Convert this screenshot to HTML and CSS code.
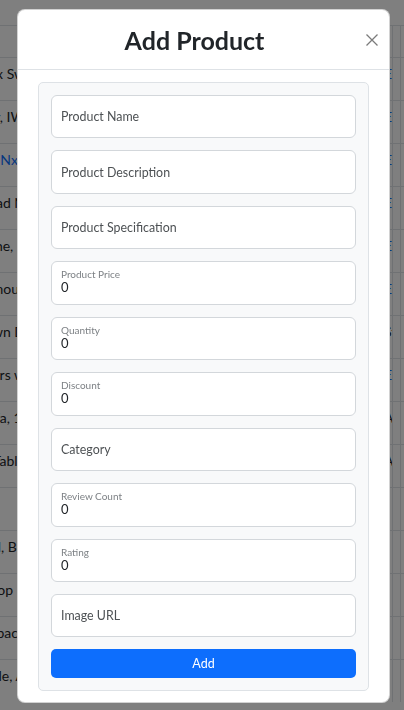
FILE: index.html
```html
<!DOCTYPE html>
<html lang="en">
<head>
<meta charset="utf-8">
<title>Add Product</title>
<link rel="stylesheet" href="styles.css">
</head>
<body>
<div class="page">
  <div class="row row-head"><div class="c1"></div><div class="c2"></div><div class="c3"></div><div class="c4"></div><div class="c5"></div></div>
  <div class="row"><div class="c1"><span>Rolex Sw</span></div><div class="c2"></div><div class="c3 link">Edit</div><div class="c4"></div><div class="c5"></div></div>
  <div class="row"><div class="c1"><span>Cartier, IW</span></div><div class="c2"></div><div class="c3 link">Edit</div><div class="c4"></div><div class="c5"></div></div>
  <div class="row"><div class="c1 link"><span>Asus NxT</span></div><div class="c2"></div><div class="c3 link">Edit</div><div class="c4"></div><div class="c5"></div></div>
  <div class="row"><div class="c1"><span>iPad N</span></div><div class="c2"></div><div class="c3 link">Edit</div><div class="c4"></div><div class="c5"></div></div>
  <div class="row"><div class="c1"><span>Phone, 6</span></div><div class="c2"></div><div class="c3 link">Edit</div><div class="c4"></div><div class="c5"></div></div>
  <div class="row"><div class="c1"><span>Famous</span></div><div class="c2"></div><div class="c3 link">Edit</div><div class="c4"></div><div class="c5"></div></div>
  <div class="row"><div class="c1"><span>Brown D</span></div><div class="c2"></div><div class="c3">Stock</div><div class="c4"></div><div class="c5"></div></div>
  <div class="row"><div class="c1"><span>Sneakers w</span></div><div class="c2"></div><div class="c3 link">Edit</div><div class="c4"></div><div class="c5"></div></div>
  <div class="row"><div class="c1"><span>Sofa, 1.</span></div><div class="c2"></div><div class="c3">Acme</div><div class="c4"></div><div class="c5"></div></div>
  <div class="row"><div class="c1"><span>Table</span></div><div class="c2"></div><div class="c3">Acme</div><div class="c4"></div><div class="c5"></div></div>
  <div class="row"><div class="c1"><span></span></div><div class="c2"></div><div class="c3"></div><div class="c4"></div><div class="c5"></div></div>
  <div class="row"><div class="c1"><span>Grill, BE</span></div><div class="c2"></div><div class="c3"></div><div class="c4"></div><div class="c5"></div></div>
  <div class="row"><div class="c1"><span>Laptop P</span></div><div class="c2"></div><div class="c3"></div><div class="c4"></div><div class="c5"></div></div>
  <div class="row"><div class="c1"><span>Backpack</span></div><div class="c2"></div><div class="c3"></div><div class="c4"></div><div class="c5"></div></div>
  <div class="row"><div class="c1"><span>Table, A</span></div><div class="c2"></div><div class="c3"></div><div class="c4"></div><div class="c5"></div></div>
</div>

<div class="backdrop"></div>

<div class="modal">
  <div class="dialog">
    <div class="modal-header">
      <h2 class="modal-title">Add Product</h2>
      <button class="btn-close" type="button" aria-label="Close">
        <svg width="12" height="12" viewBox="0 0 12 12"><path d="M0.5 0.5L11.5 11.5M11.5 0.5L0.5 11.5" stroke="#7b7b7b" stroke-width="1.3" fill="none"/></svg>
      </button>
    </div>
    <div class="modal-body">
      <form class="panel">
        <div class="field"><span class="placeholder">Product Name</span></div>
        <div class="field"><span class="placeholder">Product Description</span></div>
        <div class="field"><span class="placeholder">Product Specification</span></div>
        <div class="field floating"><span class="label">Product Price</span><span class="value">0</span></div>
        <div class="field floating"><span class="label">Quantity</span><span class="value">0</span></div>
        <div class="field floating"><span class="label">Discount</span><span class="value">0</span></div>
        <div class="field"><span class="placeholder">Category</span></div>
        <div class="field floating"><span class="label">Review Count</span><span class="value">0</span></div>
        <div class="field floating"><span class="label">Rating</span><span class="value">0</span></div>
        <div class="field"><span class="placeholder">Image URL</span></div>
        <button class="btn-add" type="button">Add</button>
      </form>
    </div>
  </div>
</div>
</body>
</html>
```

FILE: styles.css
```css
* { box-sizing: border-box; }

html, body {
  margin: 0;
  height: 710px;
  overflow: hidden;
}

body {
  font-family: Lato, "Noto Sans", sans-serif;
  color: #212529;
  background: #ffffff;
}

/* background table */
.page {
  padding-top: 25px;
}

.row {
  display: grid;
  grid-template-columns: 25px 1fr 8px 8px 4px;
  height: 43px;
  border-top: 1px solid #dee2e6;
  font-size: 14px;
  line-height: 20px;
}

.row-head {
  height: 32px;
}

.c1 {
  display: flex;
  justify-content: flex-end;
  overflow: hidden;
  white-space: nowrap;
  padding-top: 6px;
}

.c3 {
  padding: 6px 0 0 0;
  overflow: hidden;
  white-space: nowrap;
}

.c4,
.c5 {
  border-left: 1px solid #dee2e6;
}

.link { color: #0d6efd; }

.backdrop {
  position: fixed;
  inset: 0;
  background: rgba(0, 0, 0, 0.5);
}

/* modal */
.modal {
  position: fixed;
  inset: 0;
  display: flex;
  align-items: flex-start;
  padding: 9px 0 0 17px;
}

.dialog {
  width: 373px;
  background: #ffffff;
  border: 1px solid rgba(0, 0, 0, 0.175);
  border-radius: 8px;
}

.modal-header {
  display: flex;
  align-items: center;
  height: 60px;
  padding: 1px 16px 0;
  border-bottom: 1px solid #dee2e6;
}

.modal-title {
  flex: 1;
  margin: 0;
  text-align: center;
  font-size: 25px;
  font-weight: 700;
  line-height: 30px;
  color: #212529;
}

.btn-close {
  width: 24px;
  height: 24px;
  margin: 0 -11px 0 5px;
  padding: 0;
  border: 0;
  background: transparent;
  display: flex;
  align-items: center;
  justify-content: center;
}

.btn-close svg { display: block; }

.modal-body {
  padding: 12px 20px 11px;
}

.panel {
  margin: 0;
  background: #f8f9fa;
  border: 1px solid #dee2e6;
  border-radius: 5px;
  padding: 12px;
  display: flex;
  flex-direction: column;
  gap: 12px;
}

.field {
  height: 43.44px;
  background: #ffffff;
  border: 1px solid #d3d7db;
  border-radius: 6px;
  padding: 0 9px;
  display: flex;
  flex-direction: column;
  justify-content: center;
}

.placeholder {
  font-size: 12.4px;
  line-height: 15px;
  color: #4d5154;
}

.field.floating {
  justify-content: flex-start;
  padding-top: 6px;
}

.label {
  font-size: 10px;
  line-height: 12px;
  color: #7d8185;
}

.value {
  font-size: 13px;
  line-height: 15px;
  color: #212529;
}

.btn-add {
  height: 29px;
  border: 0;
  border-radius: 5px;
  background: #0d6efd;
  color: #ffffff;
  font-family: Lato, "Noto Sans", sans-serif;
  font-size: 12.5px;
  padding: 0;
}
```
